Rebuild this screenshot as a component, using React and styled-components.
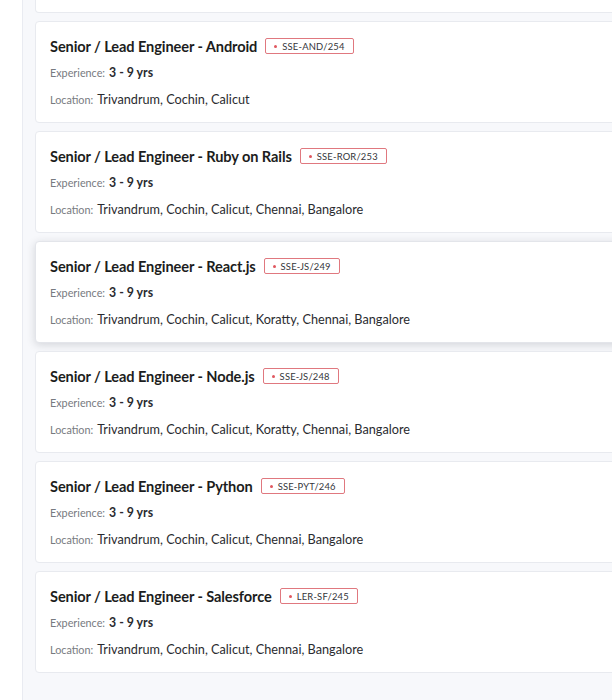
import React from 'react'
import styled, { createGlobalStyle } from 'styled-components'

const GlobalStyle = createGlobalStyle`
  html, body {
    margin: 0;
    padding: 0;
    overflow: hidden;
    background: #f7f8fb;
    font-family: Lato, "Open Sans", sans-serif;
  }
`

const Page = styled.div`
  display: flex;
  width: 612px;
  height: 700px;
  overflow: hidden;
`

const Sidebar = styled.div`
  width: 22px;
  flex-shrink: 0;
  background: #ffffff;
  border-right: 1px solid #e9ebf1;
`

const Main = styled.div`
  flex: 1;
  padding-left: 12px;
  background: #f7f8fb;
`

const List = styled.div`
  display: flex;
  flex-direction: column;
  gap: 8px;
  width: 620px;
`

// tail of the card scrolled above the viewport
const CardTail = styled.div`
  height: 13px;
  box-sizing: border-box;
  background: #ffffff;
  border: 1px solid #e8eaef;
  border-top: none;
  border-radius: 0 0 4px 4px;
`

const Card = styled.div`
  height: 102px;
  box-sizing: border-box;
  background: #ffffff;
  border: 1px solid ${p => (p.$active ? '#e3e5ea' : '#e8eaef')};
  border-radius: 4px;
  padding: 14px 14px 0 14px;
  box-shadow: ${p => (p.$active ? '0 2px 8px rgba(30, 35, 50, 0.16)' : 'none')};
`

const TitleRow = styled.div`
  display: flex;
  align-items: center;
  gap: 8px;
  height: 20px;
`

const Title = styled.h3`
  margin: 0;
  font-size: 14.6px;
  font-weight: 700;
  color: #1c1d20;
  letter-spacing: -0.1px;
`

const Tag = styled.span`
  display: inline-flex;
  align-items: center;
  gap: 5px;
  height: 14px;
  padding: 0 8px;
  border: 1px solid #e0787f;
  border-radius: 2px;
  font-size: 9.4px;
  color: #33353a;
  letter-spacing: 0.2px;

  &::before {
    content: '';
    width: 3px;
    height: 3px;
    border-radius: 50%;
    background: #e0575f;
  }
`

const Line = styled.div`
  display: flex;
  align-items: baseline;
  gap: 4px;
  margin-top: ${p => p.$gap};
`

const Label = styled.span`
  font-size: 10.8px;
  color: #777a80;
`

const Value = styled.span`
  font-size: ${p => (p.$bold ? '12.3px' : '12.7px')};
  font-weight: ${p => (p.$bold ? 700 : 400)};
  color: #2a2b2f;
`

const jobs = [
  { title: 'Senior / Lead Engineer - Android', code: 'SSE-AND/254', loc: 'Trivandrum, Cochin, Calicut' },
  { title: 'Senior / Lead Engineer - Ruby on Rails', code: 'SSE-ROR/253', loc: 'Trivandrum, Cochin, Calicut, Chennai, Bangalore' },
  { title: 'Senior / Lead Engineer - React.js', code: 'SSE-JS/249', loc: 'Trivandrum, Cochin, Calicut, Koratty, Chennai, Bangalore', active: true },
  { title: 'Senior / Lead Engineer - Node.js', code: 'SSE-JS/248', loc: 'Trivandrum, Cochin, Calicut, Koratty, Chennai, Bangalore' },
  { title: 'Senior / Lead Engineer - Python', code: 'SSE-PYT/246', loc: 'Trivandrum, Cochin, Calicut, Chennai, Bangalore' },
  { title: 'Senior / Lead Engineer - Salesforce', code: 'LER-SF/245', loc: 'Trivandrum, Cochin, Calicut, Chennai, Bangalore' },
]

export default function App() {
  return (
    <Page>
      <GlobalStyle />
      <Sidebar />
      <Main>
        <List>
          <CardTail />
          {jobs.map(job => (
            <Card key={job.code} $active={job.active}>
              <TitleRow>
                <Title>{job.title}</Title>
                <Tag>{job.code}</Tag>
              </TitleRow>
              <Line $gap="9px">
                <Label>Experience:</Label>
                <Value $bold>3 - 9 yrs</Value>
              </Line>
              <Line $gap="11px">
                <Label>Location:</Label>
                <Value>{job.loc}</Value>
              </Line>
            </Card>
          ))}
        </List>
      </Main>
    </Page>
  )
}
